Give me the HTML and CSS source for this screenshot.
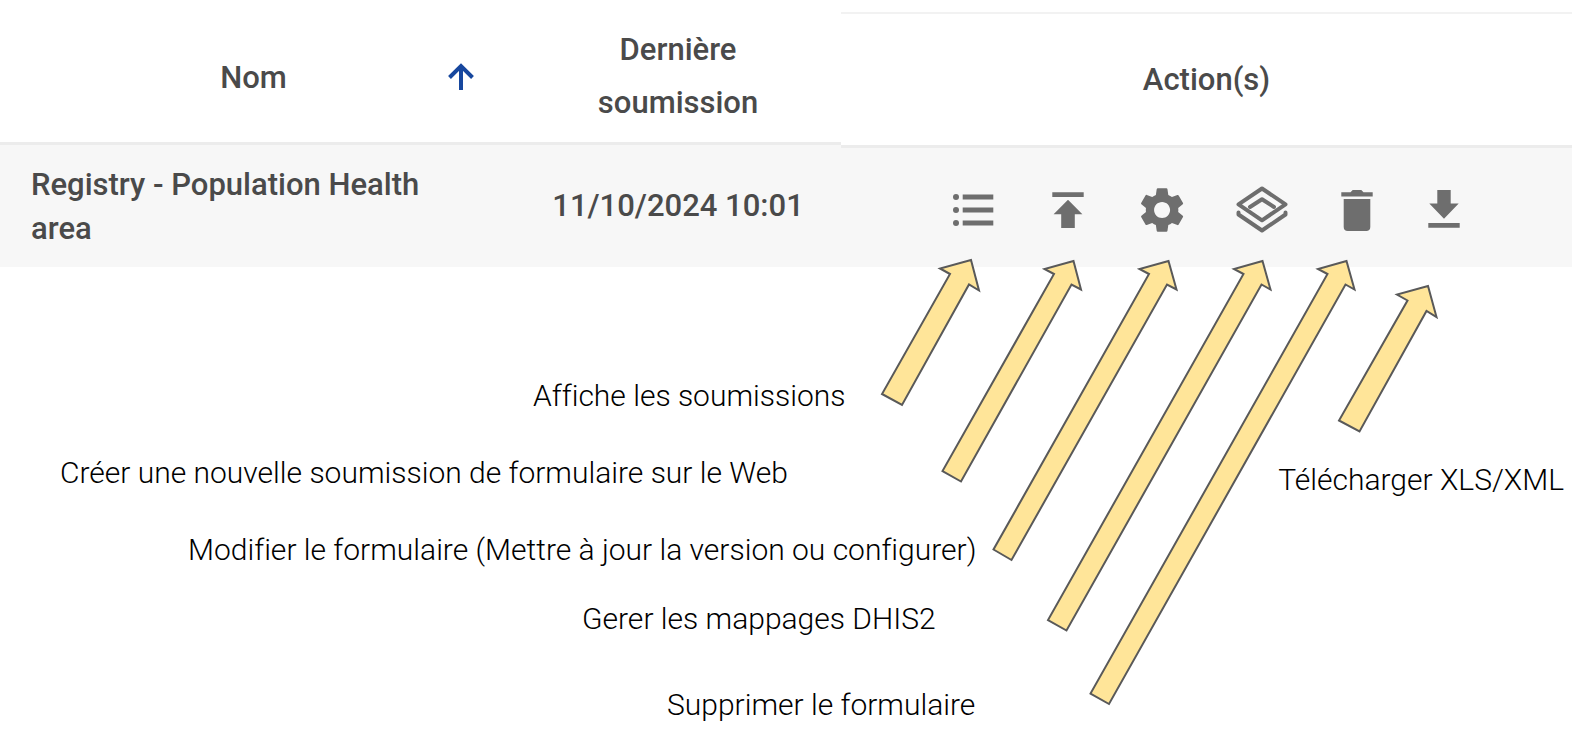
FILE: index.html
```html
<!DOCTYPE html>
<html lang="fr">
<head>
<meta charset="utf-8">
<title>Formulaires</title>
<link rel="stylesheet" href="styles.css">
</head>
<body>
<main class="guide">
  <table class="forms">
    <colgroup><col class="col-name"><col class="col-date"><col class="col-actions"></colgroup>
    <thead>
      <tr>
        <th scope="col" class="head-name">
          <div class="sortable">
            <span class="sort-label">Nom</span>
            <button type="button" class="icon-button" aria-label="Trier par nom">
              <svg class="sort-icon" width="28" height="28" viewBox="0 0 28 28"><path d="M14 27V4M2.500 14.500 14 3l11.500 11.500"/></svg>
            </button>
          </div>
        </th>
        <th scope="col" class="head-date">Dernière<br>soumission</th>
        <th scope="col" class="head-actions">Action(s)</th>
      </tr>
    </thead>
    <tbody>
      <tr>
        <td class="cell-name">Registry - Population Health area</td>
        <td class="cell-date">11/10/2024 10:01</td>
        <td class="cell-actions">
          <div class="actions">
            <button type="button" class="icon-button" aria-label="Soumissions">
              <svg width="52" height="52" viewBox="0 0 52 52"><circle cx="9" cy="13" r="3"/><circle cx="9" cy="26" r="3"/><circle cx="9" cy="39" r="3"/><path d="M15.700 10.500h30.600v5H15.700zM15.700 23.500h30.600v5H15.700zM15.700 36.500h30.600v5H15.700z"/></svg>
            </button>
            <button type="button" class="icon-button" aria-label="Nouvelle soumission">
              <svg width="36" height="52" viewBox="0 0 36 52"><path d="M2.300 8.300h31.400v4.700H2.300zM18 15.700l14.400 14.600h-7.600V44H11.200V30.300H3.600z"/></svg>
            </button>
            <button type="button" class="icon-button" aria-label="Modifier">
              <svg width="48" height="52" viewBox="0.500 0 22 24"><path d="M19.430 12.980c.040-.320.070-.640.070-.980s-.030-.660-.070-.980l2.110-1.650c.190-.150.240-.420.120-.640l-2-3.460c-.120-.220-.390-.300-.610-.220l-2.490 1c-.520-.400-1.080-.730-1.690-.980l-.380-2.650C14.460 2.180 14.250 2 14 2h-4c-.250 0-.460.180-.490.420l-.380 2.650c-.610.250-1.170.590-1.690.980l-2.490-1c-.230-.090-.490 0-.610.220l-2 3.460c-.130.220-.070.490.120.640l2.110 1.650c-.040.320-.070.650-.070.980s.030.660.070.980l-2.110 1.650c-.190.150-.240.420-.120.640l2 3.460c.120.220.390.300.610.220l2.490-1c.520.400 1.080.730 1.690.980l.380 2.650c.030.240.240.420.490.420h4c.250 0 .460-.180.490-.420l.380-2.650c.610-.250 1.170-.590 1.690-.980l2.490 1c.230.090.490 0 .610-.220l2-3.460c.120-.220.070-.490-.120-.640l-2.110-1.650zM12 15.700c-2.040 0-3.700-1.660-3.700-3.700s1.660-3.700 3.700-3.700 3.700 1.660 3.700 3.700-1.660 3.700-3.700 3.700z"/></svg>
            </button>
            <button type="button" class="icon-button" aria-label="Mappages DHIS2">
              <svg class="outline" width="52" height="52" viewBox="0 0 52 52"><path d="M26 4.500 49.500 20.300 26 36.300 2.500 20.300zM14 23 26 15.300 38 23M2.500 28.500v2l23.500 16 23.500-16v-2"/></svg>
            </button>
            <button type="button" class="icon-button" aria-label="Supprimer">
              <svg width="36" height="52" viewBox="0 0 36 52"><path d="M2.300 8.300h9.200l2.200-2.300h8.600l2.200 2.300h9.200v4.200H2.300zM4.700 15h26.600v28c0 2.500-1.500 4-4 4H8.700c-2.500 0-4-1.500-4-4z"/></svg>
            </button>
            <button type="button" class="icon-button" aria-label="Télécharger">
              <svg width="36" height="52" viewBox="0 0 36 52"><path d="M11.300 6h13.400v13.500h8L18 34.700 3.300 19.500h8zM2.300 39h31.400v4.700H2.300z"/></svg>
            </button>
          </div>
        </td>
      </tr>
    </tbody>
  </table>

  <section class="notes">
    <ul class="note-list">
      <li class="note note-show">Affiche les soumissions</li>
      <li class="note note-create">Créer une nouvelle soumission de formulaire sur le Web</li>
      <li class="note note-edit">Modifier le formulaire (Mettre à jour la version ou configurer)</li>
      <li class="note note-map">Gerer les mappages DHIS2</li>
      <li class="note note-delete">Supprimer le formulaire</li>
    </ul>
    <p class="note note-download">Télécharger XLS/XML</p>
  </section>

  <svg class="arrows" viewBox="0 0 1572 746" aria-hidden="true">
    <path d="M971 260 940 268.500 950 274 882 394 902 405 969 284.500 979 290.500z"/>
    <path d="M1073.500 261 1044.500 269 1054 274 942.500 471 961 481.500 1071.500 284.500 1081 289.500z"/>
    <path d="M1168.500 261 1139.500 269 1149 274 993.500 549.500 1011.500 560 1167 284.500 1176.500 289.500z"/>
    <path d="M1262.500 261 1234 269 1243.500 274 1048 620 1066.500 630.500 1261.500 284.500 1270.500 289.500z"/>
    <path d="M1346.500 261 1318 269 1327.500 274 1090.500 693.500 1109 704 1345.500 284.500 1354.500 289.500z"/>
    <path d="M1428 286 1397 294.500 1407.500 300.500 1339 420.500 1359.500 431.500 1426.500 311 1436.500 317z"/>
  </svg>
</main>
</body>
</html>
```
FILE: styles.css
```css
* { box-sizing: border-box; }

body {
  margin: 0;
  background: #fff;
  color: #000;
  font-family: Roboto, "Liberation Sans", sans-serif;
  font-size: 30px;
}

.guide {
  position: relative;
  padding-top: 12px;
}

/* Table */
.forms {
  width: 100%;
  table-layout: fixed;
  border-collapse: separate;
  border-spacing: 0;
  color: #4a4a4a;
  font-size: 31px;
}

.col-name { width: 32%; }
.col-date { width: 21.500%; }

.forms th {
  height: 133px;
  padding: 0;
  font-weight: 500;
  line-height: 53px;
  text-align: center;
}

.head-name,
.head-date { border-bottom: 3px solid #ececec; }

.forms .head-date { padding: 0 0 2px 12px; }

.head-actions { border-top: 2px solid #f2f2f2; }

.sortable {
  display: grid;
  grid-template-columns: 1fr auto 1fr;
  align-items: center;
  padding-left: 4px;
}

.sort-label { grid-column: 2; }

.sortable .icon-button {
  justify-self: end;
  margin-right: 28px;
}

.forms td {
  height: 122px;
  padding: 0;
  background: #f7f7f7;
  line-height: 44px;
}

.forms .cell-name { padding: 2px 64px 0 31px; }

.forms .cell-date {
  padding-left: 12px;
  text-align: center;
}

.cell-name,
.cell-date { font-weight: 500; }

.forms .cell-actions {
  padding: 4px 4px 0 0;
  border-top: 3px solid #ececec;
}

.actions {
  display: flex;
  justify-content: center;
  gap: 51px;
}

.icon-button {
  display: block;
  padding: 0;
  border: 0;
  background: none;
  cursor: pointer;
}

.icon-button svg {
  display: block;
  fill: #6e6e6e;
}

.icon-button .outline {
  fill: none;
  stroke: #6e6e6e;
  stroke-width: 4;
  stroke-linejoin: round;
  stroke-linecap: round;
}

.icon-button .sort-icon {
  fill: none;
  stroke: #17479e;
  stroke-width: 4;
}

/* Captions */
.notes {
  display: flex;
  justify-content: space-between;
  padding: 111px 8px 0 0;
}

.note-list {
  margin: 0;
  padding: 0;
  list-style: none;
}

.note {
  font-weight: 300;
  font-variant-ligatures: none;
  line-height: 36px;
  white-space: nowrap;
}

.note-show { padding-left: 533px; }
.note-create { margin-top: 41px; padding-left: 60px; }
.note-edit { margin-top: 41px; padding-left: 188px; }
.note-map { margin-top: 33px; padding-left: 582px; }
.note-delete { margin-top: 50px; padding-left: 667px; }
.note-download { margin: 84px 0 0; }

/* Pointers from captions to action icons */
.arrows {
  position: absolute;
  top: 0;
  left: 0;
  width: 100%;
  pointer-events: none;
  fill: #ffe599;
  stroke: #595959;
  stroke-width: 2;
}
```
